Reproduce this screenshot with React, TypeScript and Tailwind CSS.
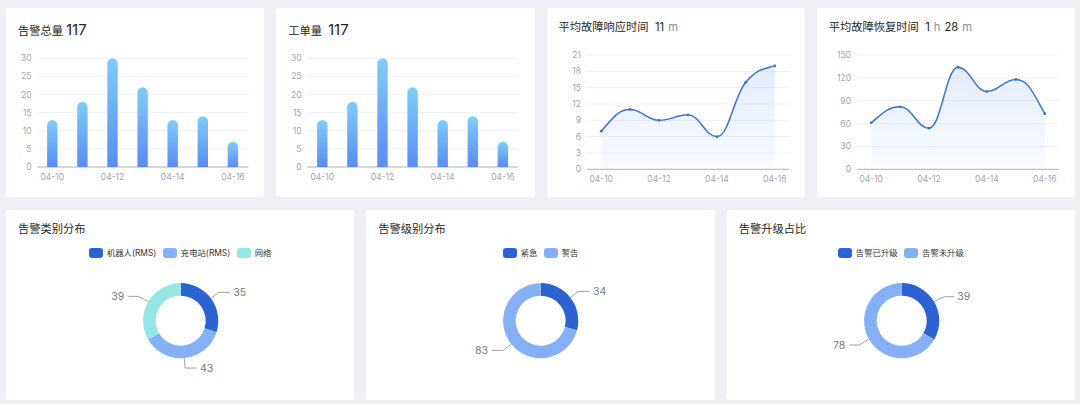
import React from 'react';

const FONT = 'font-["Inter","Noto_Sans_CJK_SC",sans-serif]';
const DATES = ['04-10', '04-11', '04-12', '04-13', '04-14', '04-15', '04-16'];

const BLUE = '#2c62d1';
const LIGHT = '#85b0f6';
const TEAL = '#96e6e4';

// monotone-x curve, so peaks stay flat on their data point; long handles keep them round
function monotonePath(pts: [number, number][]) {
  const n = pts.length;
  const slopes: number[] = [];
  for (let i = 0; i < n - 1; i++) {
    slopes.push((pts[i + 1][1] - pts[i][1]) / (pts[i + 1][0] - pts[i][0]));
  }
  const t: number[] = new Array(n).fill(0);
  for (let i = 1; i < n - 1; i++) {
    const a = slopes[i - 1];
    const b = slopes[i];
    if (a * b <= 0) t[i] = 0;
    else t[i] = (Math.sign(a) + Math.sign(b)) * Math.min(Math.abs(a), Math.abs(b), 0.25 * Math.abs(a + b));
  }
  t[0] = (3 * slopes[0] - t[1]) / 2;
  t[n - 1] = (3 * slopes[n - 2] - t[n - 2]) / 2;
  let d = `M${pts[0][0]} ${pts[0][1]}`;
  for (let i = 0; i < n - 1; i++) {
    const h = (pts[i + 1][0] - pts[i][0]) * 0.42;
    d += ` C${pts[i][0] + h} ${pts[i][1] + h * t[i]} ${pts[i + 1][0] - h} ${pts[i + 1][1] - h * t[i + 1]} ${pts[i + 1][0]} ${pts[i + 1][1]}`;
  }
  return d;
}

const Grid: React.FC<{ ticks: number[]; max: number; left: number; right: number; top: number; base: number; labelX: number }> = ({
  ticks,
  max,
  left,
  right,
  top,
  base,
  labelX,
}) => (
  <>
    {ticks.map((v) => {
      const y = base - (v / max) * (base - top);
      return (
        <g key={v}>
          <line x1={left} x2={right} y1={y} y2={y} stroke={v === 0 ? '#a6a8ad' : '#eef1f9'} strokeWidth={v === 0 ? 0.9 : 1} />
          <text x={labelX} y={y} textAnchor="end" dominantBaseline="central" fontSize="8.5" fill="#a3a6ad">
            {v}
          </text>
        </g>
      );
    })}
  </>
);

const BarChart: React.FC<{ id: string; values: number[] }> = ({ id, values }) => {
  const base = 123;
  const top = 14.3;
  return (
    <svg width="258" height="153" viewBox="0 0 258 153" className="block">
      <defs>
        <linearGradient id={id} x1="0" y1="0" x2="0" y2="1">
          <stop offset="0" stopColor="#7fcdf9" />
          <stop offset="1" stopColor="#5a8cf1" />
        </linearGradient>
      </defs>
      <Grid ticks={[0, 5, 10, 15, 20, 25, 30]} max={30} left={31.3} right={242.3} top={top} base={base} labelX={25.5} />
      {values.map((v, i) => {
        const x = 46.3 + i * 30.1;
        const y = base - (v / 30) * (base - top);
        return (
          <path
            key={i}
            d={`M${x - 5.2} ${base} V${y + 5.2} A5.2 5.2 0 0 1 ${x + 5.2} ${y + 5.2} V${base} Z`}
            fill={`url(#${id})`}
          />
        );
      })}
      {[0, 2, 4, 6].map((i) => (
        <text key={i} x={46.3 + i * 30.1} y={136} textAnchor="middle" fontSize="8.5" fill="#a3a6ad">
          {DATES[i]}
        </text>
      ))}
    </svg>
  );
};

const LineChart: React.FC<{ id: string; values: number[]; ticks: number[]; max: number }> = ({ id, values, ticks, max }) => {
  const base = 125.3;
  const top = 11;
  const pts = values.map((v, i) => [54.2 + i * 28.93, base - (v / max) * (base - top)] as [number, number]);
  const line = monotonePath(pts);
  return (
    <svg width="258" height="153" viewBox="0 0 258 153" className="block">
      <defs>
        <linearGradient id={id} x1="0" y1="0" x2="0" y2="1">
          <stop offset="0" stopColor="#3b7be8" stopOpacity="0.14" />
          <stop offset="1" stopColor="#3b7be8" stopOpacity="0.03" />
        </linearGradient>
      </defs>
      <Grid ticks={ticks} max={max} left={40.2} right={242.2} top={top} base={base} labelX={34} />
      <path d={`${line} L${pts[6][0]} ${base} L${pts[0][0]} ${base} Z`} fill={`url(#${id})`} />
      <path d={line} fill="none" stroke="#3b70d9" strokeWidth="1.5" />
      {pts.map(([x, y], i) => (
        <circle key={i} cx={x} cy={y} r="1.4" fill="#3b70d9" />
      ))}
      {[0, 2, 4, 6].map((i) => (
        <text key={i} x={pts[i][0]} y={138} textAnchor="middle" fontSize="8.5" fill="#a3a6ad">
          {DATES[i]}
        </text>
      ))}
    </svg>
  );
};

type Leader = { pts: [number, number][]; label: string; x: number; anchor: 'start' | 'end' };

const Donut: React.FC<{ parts: { value: number; color: string }[]; center: number; leaders: Leader[] }> = ({ parts, center, leaders }) => {
  const cx = 174.7;
  const cy = 60.7;
  const outer = 37.6;
  const inner = 25;
  const total = parts.reduce((s, p) => s + p.value, 0);
  let start = 0;
  const pos = (r: number, f: number) => {
    const a = f * 2 * Math.PI;
    return `${cx + r * Math.sin(a)} ${cy - r * Math.cos(a)}`;
  };
  // leader coordinates were read at 3x, from the ring's centre
  const rx = (z: number) => cx + (z - center) / 3;
  const ry = (z: number) => cy + (z - 350) / 3;
  return (
    <svg width="348" height="139" viewBox="0 0 348 139" className="block">
      {parts.map((p, i) => {
        const end = start + p.value / total;
        const large = end - start > 0.5 ? 1 : 0;
        const d = `M${pos(outer, start)} A${outer} ${outer} 0 ${large} 1 ${pos(outer, end)} L${pos(inner, end)} A${inner} ${inner} 0 ${large} 0 ${pos(inner, start)} Z`;
        start = end;
        return <path key={i} d={d} fill={p.color} />;
      })}
      {leaders.map((l) => (
        <g key={l.label}>
          <polyline points={l.pts.map(([x, y]) => `${rx(x)},${ry(y)}`).join(' ')} fill="none" stroke="#8a8a8a" strokeWidth="0.8" />
          <text x={rx(l.x)} y={ry(l.pts[2][1])} textAnchor={l.anchor} dominantBaseline="central" fontSize="10.5" fill="#77797d">
            {l.label}
          </text>
        </g>
      ))}
    </svg>
  );
};

const Legend: React.FC<{ items: { name: string; color: string }[] }> = ({ items }) => (
  <div className="mt-[11px] flex h-[10px] items-center justify-center gap-[6.5px]">
    {items.map((item) => (
      <div key={item.name} className="flex items-center gap-[4px]">
        <span className="h-[10px] w-[14px] rounded-[3px]" style={{ backgroundColor: item.color }} />
        <span className="text-[8.35px] leading-[10px] text-[#333]">{item.name}</span>
      </div>
    ))}
  </div>
);

const Unit: React.FC<{ children: React.ReactNode }> = ({ children }) => (
  <span className="mx-[4px] text-[#8b8d92]">{children}</span>
);

const Big: React.FC = () => <span className="text-[15px] leading-none">117</span>;

const BarCard: React.FC<{ title: string; gap: string; children: React.ReactNode }> = ({ title, gap, children }) => (
  <div className="h-[189px] rounded-[2px] bg-white">
    <div className={`flex h-[36px] items-baseline pl-[12px] pt-[14px] text-[11.25px] text-[#262626] ${gap}`}>
      <span>{title}</span>
      <Big />
    </div>
    {children}
  </div>
);

const LineCard: React.FC<{ title: string; value: React.ReactNode; children: React.ReactNode }> = ({ title, value, children }) => (
  <div className="h-[189px] rounded-[2px] bg-white">
    <div className="flex h-[36px] gap-[6.5px] pl-[12px] pt-[11px] text-[11.25px] leading-[16px] text-[#262626]">
      <span>{title}</span>
      <span>{value}</span>
    </div>
    {children}
  </div>
);

const BottomCard: React.FC<{ title: string; legend: { name: string; color: string }[]; children: React.ReactNode }> = ({ title, legend, children }) => (
  <div className="h-[189.5px] rounded-[2px] bg-white">
    <div className="pl-[12px] pt-[11px] text-[11.25px] leading-[16px] text-[#262626]">{title}</div>
    <Legend items={legend} />
    <div className="mt-[2px]">{children}</div>
  </div>
);

const BARS = [13, 18, 30, 22, 13, 14, 7];

export default function App() {
  return (
    <div className={`h-[404px] w-[1080px] overflow-hidden bg-[#eff0f5] pl-[6px] pr-[5px] pt-[8px] ${FONT}`}>
      <div className="grid grid-cols-4 gap-x-3">
        <BarCard title="告警总量" gap="gap-[3px]">
          <BarChart id="bar-a" values={BARS} />
        </BarCard>
        <BarCard title="工单量" gap="gap-[6px]">
          <BarChart id="bar-b" values={BARS} />
        </BarCard>
        <LineCard title="平均故障响应时间" value={<>11<Unit>m</Unit></>}>
          <LineChart id="line-a" values={[7, 11, 9, 10, 6, 16, 19]} ticks={[0, 3, 6, 9, 12, 15, 18, 21]} max={21} />
        </LineCard>
        <LineCard title="平均故障恢复时间" value={<>1<Unit>h</Unit>28<Unit>m</Unit></>}>
          <LineChart id="line-b" values={[61, 82, 54, 134, 102, 118, 73]} ticks={[0, 30, 60, 90, 120, 150]} max={150} />
        </LineCard>
      </div>
      <div className="mt-[13px] grid grid-cols-3 gap-x-3">
        <BottomCard
          title="告警类别分布"
          legend={[
            { name: '机器人(RMS)', color: BLUE },
            { name: '充电站(RMS)', color: LIGHT },
            { name: '网络', color: TEAL },
          ]}
        >
          <Donut
            center={542}
            parts={[
              { value: 35, color: BLUE },
              { value: 43, color: LIGHT },
              { value: 39, color: TEAL },
            ]}
            leaders={[
              { label: '35', pts: [[635, 282], [655, 265], [690, 265]], x: 700, anchor: 'start' },
              { label: '43', pts: [[553, 463], [555, 492], [590, 492]], x: 600, anchor: 'start' },
              { label: '39', pts: [[445, 293], [415, 277], [385, 277]], x: 373, anchor: 'end' },
            ]}
          />
        </BottomCard>
        <BottomCard
          title="告警级别分布"
          legend={[
            { name: '紧急', color: BLUE },
            { name: '警告', color: LIGHT },
          ]}
        >
          <Donut
            center={543}
            parts={[
              { value: 34, color: BLUE },
              { value: 83, color: LIGHT },
            ]}
            leaders={[
              { label: '34', pts: [[630, 282], [655, 262], [690, 262]], x: 700, anchor: 'start' },
              { label: '83', pts: [[455, 420], [430, 439], [396, 439]], x: 385, anchor: 'end' },
            ]}
          />
        </BottomCard>
        <BottomCard
          title="告警升级占比"
          legend={[
            { name: '告警已升级', color: BLUE },
            { name: '告警未升级', color: LIGHT },
          ]}
        >
          <Donut
            center={544}
            parts={[
              { value: 39, color: BLUE },
              { value: 78, color: LIGHT },
            ]}
            leaders={[
              { label: '39', pts: [[640, 293], [672, 278], [702, 278]], x: 711, anchor: 'start' },
              { label: '78', pts: [[445, 405], [417, 423], [387, 423]], x: 375, anchor: 'end' },
            ]}
          />
        </BottomCard>
      </div>
    </div>
  );
}
